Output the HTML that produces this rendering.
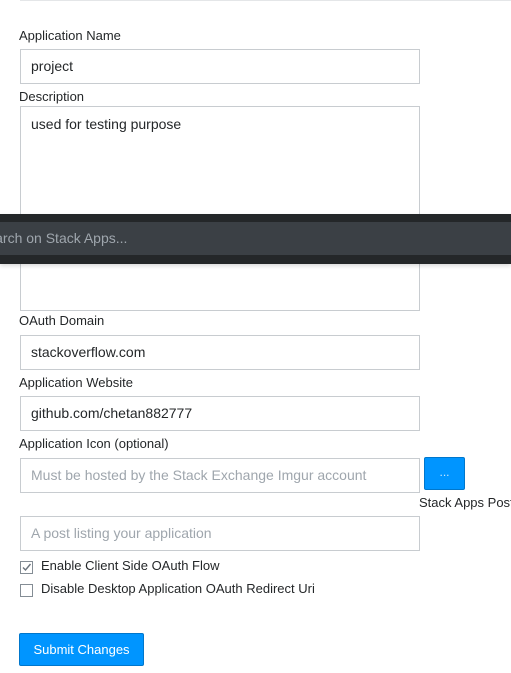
<!DOCTYPE html>
<html><head><style>
body{margin:0;width:511px;height:673px;background:#fff;font-family:"Liberation Sans",Arial,sans-serif;position:relative;overflow:hidden;color:#242729}
.a{position:absolute}
.lbl{font-size:13px;left:19px}
.in{left:20px;width:400px;height:33px;border:1px solid #c8ccd0;box-sizing:border-box;font-size:14px;padding-left:10px;line-height:31px;background:#fff}
.ph{color:#9fa6ad}
.cb{left:20px;width:12px;height:12px;border:1px solid #848d95;box-sizing:border-box;background:#fff}
</style></head><body>
<div class="a" style="left:20px;top:0;width:491px;height:1px;background:#e4e6e8"></div>
<div class="a lbl" style="top:28px">Application Name</div>
<div class="a in" style="top:49px;height:35px;line-height:33px">project</div>
<div class="a lbl" style="top:89px">Description</div>
<div class="a in" style="top:106px;height:205px;line-height:34px">used for testing purpose</div>
<div class="a" style="left:0;top:214px;width:511px;height:50px;background:#242729;box-shadow:0 2px 4px rgba(0,0,0,.15)"></div>
<div class="a" style="left:0;top:222px;width:511px;height:33px;background:#3b4045;color:#9fa6ad;font-size:14px;line-height:33px;white-space:nowrap"><span style="margin-left:-22px">Search on Stack Apps...</span></div>
<div class="a lbl" style="top:313px">OAuth Domain</div>
<div class="a in" style="top:335px;height:35px;line-height:33px">stackoverflow.com</div>
<div class="a lbl" style="top:375px">Application Website</div>
<div class="a in" style="top:396px;height:35px;line-height:33px">github.com/chetan882777</div>
<div class="a lbl" style="top:436px">Application Icon (optional)</div>
<div class="a in ph" style="top:458px;height:35px;line-height:33px">Must be hosted by the Stack Exchange Imgur account</div>
<div class="a" style="left:424px;top:457px;width:41px;height:33px;background:#0095ff;border:1px solid #07c;box-sizing:border-box;border-radius:2px;color:#cde9fe;font-size:12px;text-align:center;line-height:28px">...</div>
<div class="a" style="left:419px;top:495px;font-size:13px;white-space:nowrap">Stack Apps Post</div>
<div class="a in ph" style="top:516px;height:35px;line-height:33px">A post listing your application</div>
<div class="a cb" style="top:561px;width:13px;height:13px"><svg width="11" height="11" style="position:absolute;left:0;top:0"><path d="M2 5.5L4.5 8L9.5 2" stroke="#6a737c" stroke-width="1.4" fill="none"/></svg></div>
<div class="a" style="left:41px;top:558px;font-size:13px">Enable Client Side OAuth Flow</div>
<div class="a cb" style="top:584px;width:13px;height:13px"></div>
<div class="a" style="left:41px;top:581px;font-size:13px">Disable Desktop Application OAuth Redirect Uri</div>
<div class="a" style="left:19px;top:633px;width:125px;height:33px;background:#0095ff;border:1px solid #07c;box-sizing:border-box;border-radius:2px;color:#fff;font-size:13px;text-align:center;line-height:31px">Submit Changes</div>
</body></html>
